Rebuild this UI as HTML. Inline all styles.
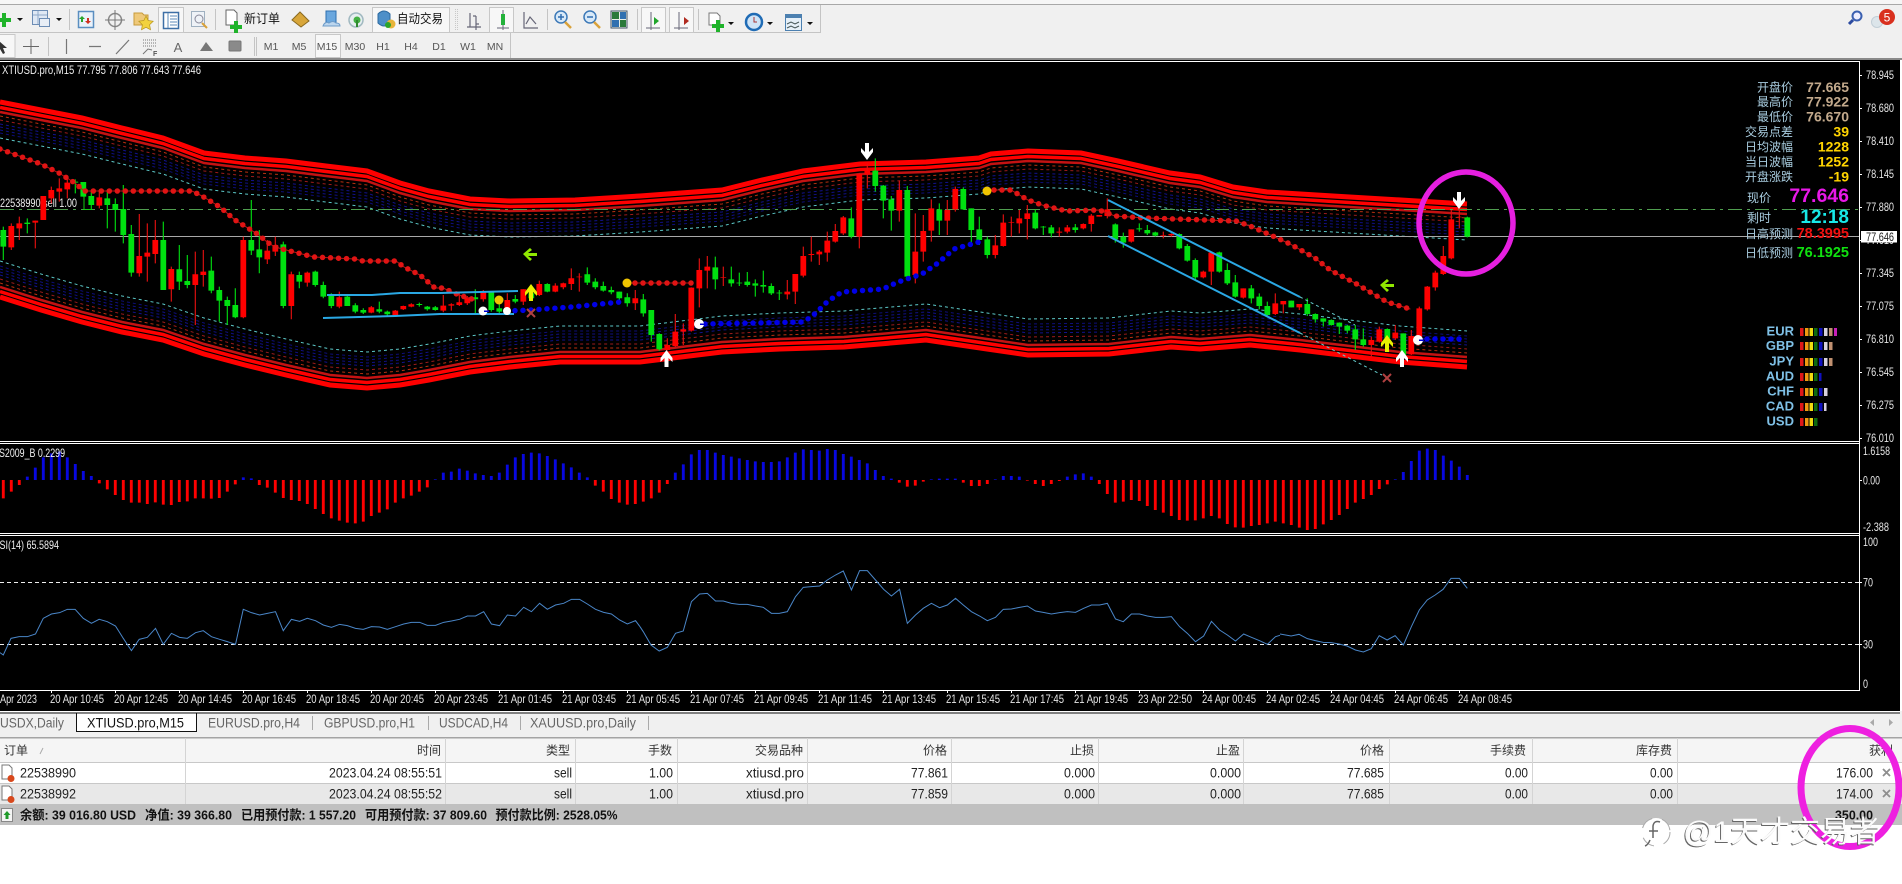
<!DOCTYPE html>
<html lang="zh"><head><meta charset="utf-8"><title>XTIUSD.pro,M15</title>
<style>
html,body{margin:0;padding:0;background:#fff;overflow:hidden}
svg{display:block;font-family:"Liberation Sans","Noto Sans CJK SC",sans-serif}
.ax{font-size:12px;fill:#e6e6e6}
.tb{font-size:13.5px;fill:#222}
.th{font-size:12px;fill:#333;text-anchor:end}
.r{text-anchor:end}
.tab{font-size:13.5px;fill:#666}
.pd{font-size:10.5px;fill:#555;text-anchor:middle}
.lb{font-size:12px;fill:#a9cde0;text-anchor:end}
.v{font-size:14px;font-weight:bold;fill:#c2a98c;text-anchor:end}
.y{fill:#ffd400}
.cur{font-size:13px;font-weight:bold;fill:#7fc0e6;text-anchor:end}
.s{font-size:13px;font-weight:bold;fill:#111}
</style></head><body>
<svg width="1902" height="884" viewBox="0 0 1902 884" xmlns="http://www.w3.org/2000/svg">
<defs>
<path id="t" d="M0 99L41 107 82 115 122 125 163 135 204 150 245 155 286 158 326 163 367 168 400 180 429 188 470 196 510 198 575 197 640 193 722 187 762 177 803 168 860 161 926 159 979 155 991 151 1028 148 1081 150 1118 158 1170 170 1200 174 1233 184 1267 189 1333 193 1417 198 1467 201"/>
<path id="b" d="M0 300L41 313 82 325 122 335 163 343 204 357 245 368 286 378 330 388 367 391 400 388 429 383 470 375 510 370 560 365 640 365 722 355 780 352 844 350 926 343 987 352 1028 358 1109 357 1171 350 1200 352 1250 348 1300 353 1333 357 1400 365 1467 370"/>
<path id="ua" d="M-2 9V0L-6 4V0L0-8 6 0V4L2 0V9Z"/>
<path id="la" d="M-7 0L0-6 2-4-2-1H7V2H-2L2 5 0 7Z"/>
</defs>
<rect width="1902" height="884" fill="#fff"/>
<!-- toolbars -->
<rect width="1902" height="60" fill="#f0f0f0"/>
<rect width="1902" height="4" fill="#f6f6f6"/>
<rect y="4" width="1902" height="1" fill="#a8a8a8"/>
<path d="M0 32.5H820.5V5M0 58.5H510.5V33" fill="none" stroke="#c4c4c4"/>
<rect y="58" width="1902" height="2" fill="#8a8a8a"/>
<!-- row 1 icons -->
<path d="M4 13V27M-3 20H11" stroke="#1fb32a" stroke-width="4"/>
<path d="M17 18h6l-3 3zM56 18h6l-3 3zM728 22h6l-3 3zM767 22h6l-3 3zM807 22h6l-3 3z" fill="#111"/>
<rect x="32.500" y="10.500" width="15" height="14" fill="#dfe8f4" stroke="#6d8db5"/><path d="M33 15H47M38 11V24" stroke="#8fa9c9"/><rect x="39.500" y="18.500" width="10" height="8" fill="#e8eef6" stroke="#6d8db5"/>
<path d="M69.500 9V30M215.500 9V30M637.500 9V30M547.500 9V30M698.500 9V30" stroke="#c4c4c4"/>
<rect x="78.500" y="11.500" width="15" height="16" fill="#eaf2fa" stroke="#5a8ec0" stroke-width="1.500"/><path d="M82 16l3 3h-2v3h-2v-3h-2z" fill="#2aa52a"/><path d="M88 24l-3-3h2v-3h2v3h2z" fill="#d03020"/>
<circle cx="115" cy="20" r="6.500" fill="none" stroke="#888" stroke-width="1.500"/><path d="M115 10V30M105 20H125" stroke="#777"/>
<path d="M134 13h8l2 2h4v10h-14z" fill="#efc97a" stroke="#c79a3a"/><path d="M146 16l2.200 4.500 5 .7-3.600 3.500.9 5-4.500-2.400-4.500 2.400.9-5-3.600-3.500 5-.7z" fill="#f2d23e" stroke="#b8961e" stroke-width=".7"/>
<rect x="158.500" y="7.500" width="25" height="25" fill="#f7f7f7" stroke="#c8c8c8"/>
<rect x="163.500" y="12.500" width="15" height="16" fill="#fff" stroke="#3d6fa6" stroke-width="1.500"/><path d="M168 13V28M170 16H177M170 19H177M170 22H177M170 25H177" stroke="#5b89b8"/>
<rect x="191.500" y="11.500" width="13" height="15" fill="#eef2f7" stroke="#9fb0c0"/><circle cx="199" cy="19" r="4" fill="none" stroke="#889"/><path d="M202 23l5 5" stroke="#d9a13a" stroke-width="2"/>
<path d="M226 10h8l3 3v12h-11z" fill="#fff" stroke="#666"/><path d="M236 21v12M230 27h12" stroke="#1fb32a" stroke-width="4"/>
<text x="244" y="23" font-size="12.500" fill="#111" textLength="36" lengthAdjust="spacingAndGlyphs">新订单</text>
<path d="M300 12l9 9-8 6-9-7z" fill="#d8a63a" stroke="#8a6a20"/>
<path d="M326 11h10v12h-10z" fill="#6aa7de" stroke="#2d6fb0"/><path d="M323 26q2-5 6-3 4-3 7 0 4 0 4 3z" fill="#bcd6ee" stroke="#6d9bc8"/>
<circle cx="356" cy="20" r="7" fill="#e6eef0" stroke="#a0b8c0" stroke-width="1.500"/><circle cx="357" cy="20" r="3.500" fill="#44b044"/><path d="M357 20v7" stroke="#2f8a2f" stroke-width="2"/>
<rect x="372.500" y="7.500" width="77" height="25" fill="#f7f7f7" stroke="#c8c8c8"/>
<path d="M378 14q6-6 12 0v9q-6 6-12 0z" fill="#4d8fc8" stroke="#2c6aa0"/><circle cx="391" cy="24" r="4.500" fill="#e8b43a"/><circle cx="388" cy="25" r="3" fill="#2aa52a"/>
<text x="397" y="23" font-size="12.500" fill="#111" textLength="46" lengthAdjust="spacingAndGlyphs">自动交易</text>
<path d="M455.500 9V30M457.500 9V30" stroke="#c8c8c8" stroke-dasharray="1 1"/>
<path d="M470 13V27M467 27H481M476 16V30M473 16H476M476 24H479" stroke="#667" stroke-width="1.200" fill="none"/>
<rect x="489.500" y="7.500" width="24" height="25" fill="#f7f7f7" stroke="#c8c8c8"/>
<path d="M503 10V30M497 28H509" stroke="#667"/><rect x="501" y="14" width="4" height="11" fill="#23b13a"/>
<path d="M524 12V28H538M526 24L530 17 536 24" fill="none" stroke="#667" stroke-width="1.200"/>
<circle cx="561" cy="17" r="6" fill="#d8e9f8" stroke="#3c79b8" stroke-width="1.500"/><path d="M558 17h6M561 14v6" stroke="#2f6db0" stroke-width="1.500"/><path d="M565 22l6 6" stroke="#d9a13a" stroke-width="2.500"/>
<circle cx="590" cy="17" r="6" fill="#d8e9f8" stroke="#3c79b8" stroke-width="1.500"/><path d="M587 17h6" stroke="#2f6db0" stroke-width="1.500"/><path d="M594 22l6 6" stroke="#d9a13a" stroke-width="2.500"/>
<rect x="611" y="11" width="16" height="17" fill="#e8f0e8" stroke="#456"/><rect x="612" y="12" width="7" height="7" fill="#2a7a3a"/><rect x="620" y="12" width="6" height="7" fill="#3070b0"/><rect x="612" y="20" width="7" height="7" fill="#3070b0"/><rect x="620" y="20" width="6" height="7" fill="#2a7a3a"/>
<rect x="641.500" y="7.500" width="24" height="25" fill="#f7f7f7" stroke="#c8c8c8"/><rect x="669.500" y="7.500" width="24" height="25" fill="#f7f7f7" stroke="#c8c8c8"/>
<path d="M651 12V30M646 28H660M679 12V30M674 28H688" stroke="#667"/><path d="M654 17l5 4-5 4z" fill="#1fa52a"/><path d="M689 21l-5-4v8z" fill="#b02a20"/>
<path d="M709 13h8l3 3v9h-11z" fill="#fff" stroke="#777"/><path d="M718 20v12M712 26h12" stroke="#1fb32a" stroke-width="4"/>
<circle cx="754" cy="22" r="8" fill="#cfe4f6" stroke="#1f6bb5" stroke-width="2.500"/><path d="M754 17v5h3" stroke="#a33" fill="none"/>
<rect x="785.500" y="14.500" width="16" height="16" fill="#e6f0f8" stroke="#4c80b0"/><rect x="785" y="14" width="17" height="4" fill="#4c80b0"/><path d="M787 24l4-2 4 2 4-2M787 28l4-2 4 2 4-2" stroke="#455" fill="none"/>
<!-- right search/badge -->
<circle cx="1857" cy="16" r="4.500" fill="#eef" stroke="#3a5fb0" stroke-width="2"/><path d="M1853 20l-4 4" stroke="#2b4aa0" stroke-width="3"/>
<circle cx="1877" cy="22" r="5.500" fill="#dce5ea" stroke="#c2ced6"/>
<circle cx="1887" cy="17" r="8" fill="#d9301e"/><text x="1887" y="21.500" font-size="12" fill="#fff" text-anchor="middle">5</text>
<!-- row 2 -->
<rect x="-1" y="34.500" width="16" height="23" fill="#f7f7f7" stroke="#c8c8c8"/>
<path d="M-1 41L7 48 3 48 5 53 3 54 0 49-1 50Z" fill="#333"/>
<path d="M31 39V54M23 46.500H39" stroke="#666"/>
<path d="M48.500 37V56M254.500 37V56M256.500 37V56" stroke="#c4c4c4"/>
<path d="M66.500 39V54M89 46.500H101M116 54L129 40" stroke="#777" stroke-width="1.200"/>
<path d="M143 40H157M143 43H157M143 46H157" stroke="#777" stroke-dasharray="1 1"/><path d="M143 54l5-5 4 1" fill="none" stroke="#777"/>
<text x="153" y="56" font-size="7" font-weight="bold" fill="#555">F</text>
<text x="178" y="52" font-size="13" fill="#666" text-anchor="middle">A</text>
<path d="M200 51L206 42 213 51Z" fill="#777"/>
<rect x="229" y="41" width="12" height="10" rx="1" fill="#8a8a8a" stroke="#777"/>
<rect x="315.500" y="34.500" width="25" height="23" fill="#f7f7f7" stroke="#c8c8c8"/>
<path d="M510.500 33V58" stroke="#c4c4c4"/>
<text class="pd" x="271" y="50">M1</text><text class="pd" x="299" y="50">M5</text><text class="pd" x="327" y="50">M15</text><text class="pd" x="355" y="50">M30</text><text class="pd" x="383" y="50">H1</text><text class="pd" x="411" y="50">H4</text><text class="pd" x="439" y="50">D1</text><text class="pd" x="468" y="50">W1</text><text class="pd" x="495" y="50">MN</text>
<!-- chart background -->
<rect y="60" width="1900" height="651" fill="#000"/>
<path d="M0 61.500H1859.500V690.500H0M0 441.500H1859M0 443.500H1859M0 533.500H1859M0 535.500H1859" fill="none" stroke="#fff"/>
<!-- bands -->
<g fill="none">
<use href="#t" y="3" stroke="#f00" stroke-width="5"/>
<use href="#t" y="8.500" stroke="#f00" stroke-width="3.500"/>
<use href="#t" y="13" stroke="#c41212" stroke-width="2.500"/>
<g stroke-dasharray="3 3" stroke-width="1">
<use href="#t" y="17" stroke="#b83010"/>
<use href="#t" y="21" stroke="#9c1c1c"/>
<use href="#t" y="25" stroke="#12128c"/>
<use href="#t" y="28" stroke="#101084"/>
<use href="#t" y="31" stroke="#101084"/>
<use href="#t" y="34" stroke="#0e0e78"/>
<use href="#t" y="39" stroke="#5cc8c8"/>
</g>
<use href="#b" y="-3" stroke="#f00" stroke-width="5"/>
<use href="#b" y="-8.500" stroke="#f00" stroke-width="3.500"/>
<use href="#b" y="-13" stroke="#c41212" stroke-width="2.500"/>
<g stroke-dasharray="3 3" stroke-width="1">
<use href="#b" y="-17" stroke="#b83010"/>
<use href="#b" y="-21" stroke="#9c1c1c"/>
<use href="#b" y="-25" stroke="#12128c"/>
<use href="#b" y="-28" stroke="#101084"/>
<use href="#b" y="-31" stroke="#101084"/>
<use href="#b" y="-34" stroke="#0e0e78"/>
<use href="#b" y="-39" stroke="#5cc8c8"/>
</g>
</g>
<!-- h lines -->
<path d="M0 209.500H1859" stroke="#4f9e4f" stroke-dasharray="14 5 3 5"/>
<path d="M0 236.500H1859" stroke="#a8a8a8"/>
<text x="0" y="207" font-size="12" fill="#eee" textLength="77" lengthAdjust="spacingAndGlyphs">22538990 sell 1.00</text>
<path d="M84 191V209.500H92" fill="none" stroke="#11cc11"/>
<!-- candles A -->
<g transform="translate(3.3 60) scale(8 .3333)" fill="none">
<path stroke="#00e010" stroke-width=".14" d="M0 500V600M3 475V520M9 358V400M10 366V410M11 395V450M13 390V505M14 415V515M15 375V550M16 495V650M20 485V690M22 555V690M23 585V685M26 590V700M27 680V785M28 710V795M29 685V775M31 420V585M32 510V640M35 545V745M37 635V685M39 632V680M40 665V715M41 700V745M43 705V738M44 730V760M45 745V762M47 725V760M48 752V768M52 728V740M53 738V752M54 738V752M59 688V765M61 695V755M62 712V762M64 705V730M66 700V720M68 670V697M73 622V675M74 655V688M75 665V695M76 680V703M77 695V730M78 700V740"/>
<path stroke="#00e010" stroke-width=".72" d="M0 510V560M3 488V492M9 365V368M10 366V410M11 408V435M13 415V435M14 432V450M15 447V525M16 522V638M20 540V690M22 628V665M23 663V675M26 632V692M27 690V722M28 720V738M29 735V772M31 540V572M32 568V592M35 553V738M37 645V665M39 635V675M40 675V710M41 707V738M43 710V738M44 736V755M45 750V758M47 748V755M48 755V763M52 732V735M53 740V748M54 742V750M59 712V718M61 695V750M62 745V755M64 717V725M66 700V715M68 672V695M73 643V668M74 665V682M75 678V692M76 690V697M77 695V715M78 712V730"/>
<path stroke="#e81010" stroke-width=".14" d="M1 490V570M2 470V540M4 482V565M5 408V480M6 380V430M7 355V425M8 350V415M12 390V445M17 462V650M18 490V665M19 480V610M21 620V725M24 575V795M25 570V680M30 530V775M33 540V612M34 530V588M36 635V778M38 635V680M42 695V745M46 738V760M49 750V770M50 737V750M51 730V742M55 705V757M56 730V752M57 700V738M58 708V735M60 690V725M63 700V765M65 688V735M67 662V708M69 670V697M70 668V688M71 625V690M72 640V695M79 690V750"/>
<path stroke="#f00" stroke-width=".72" d="M1 498V562M2 490V505M4 482V488M5 408V480M6 390V415M7 385V395M8 368V388M12 412V437M17 588V640M18 578V590M19 540V582M21 627V688M24 643V675M25 635V645M30 540V772M33 572V598M34 555V575M36 643V738M38 638V668M42 712V740M46 742V758M49 752V765M50 738V748M51 733V740M55 737V752M56 733V737M57 727V735M58 712V730M60 697V718M63 720V755M65 688V725M67 672V705M69 677V695M70 670V682M71 655V672M72 650V652M79 715V730"/>
</g>
<!-- candles B -->
<g transform="translate(643.3 120) scale(8 .3333)" fill="none">
<path stroke="#00e010" stroke-width=".14" d="M0 522V590M1 570V665M2 640V692M9 410V508M11 440V500M12 458V498M13 456V500M14 478V530M15 452V518M16 490V525M17 510V540M26 262V355M29 115V215M30 195V295M31 228V332M33 198V475M37 250V345M40 202V270M41 265V370M42 290V375M43 350V415M49 268V328M50 318V345M51 315V352M54 312V338M59 310V368M60 338V383M62 310V335M63 315V345M64 335V350M67 340V388M68 372V425M69 415V482M72 395V458M73 430V495M74 465V533M76 495V550M77 520V568M78 545V590"/>
<path stroke="#00e010" stroke-width=".72" d="M0 538V580M1 570V645M2 642V688M9 442V478M11 478V490M12 488V490M13 485V495M14 490V497M15 495V500M16 498V520M17 518V520M26 295V350M29 152V198M30 197V242M31 238V272M33 210V470M37 268V302M40 207V268M41 265V330M42 328V360M43 358V405M49 278V325M50 320V322M51 322V340M54 322V330M59 313V358M60 350V368M62 325V328M63 330V340M64 337V347M67 342V385M68 378V422M69 420V472M72 397V455M73 450V490M74 487V530M76 505V535M77 530V558M78 558V585"/>
<path stroke="#e81010" stroke-width=".14" d="M3 655V692M4 582V682M5 610V675M6 502V635M7 415V562M8 408V505M10 440V498M18 480V538M19 490V552M20 380V472M21 350V425M22 390V435M23 335V425M24 312V368M25 288V345M27 160V385M28 130V205M32 182V305M34 280V490M35 285V425M36 238V365M38 240V345M39 200V275M44 345V415M45 283V380M46 290V350M47 270V340M48 255V358M52 322V350M53 315V340M55 310V328M56 282V335M57 285V290M58 235V295M61 328V368M65 335V355M66 340V350M70 452V475M71 395V495M75 505V536M79 520V585"/>
<path stroke="#f00" stroke-width=".72" d="M3 675V690M4 635V678M5 628V635M6 503V632M7 450V505M8 440V452M10 472V474M18 515V523M19 462V515M20 408V467M21 402V405M22 395V403M23 362V398M24 333V365M25 292V340M27 162V350M28 153V163M32 210V272M34 395V465M35 333V395M36 265V332M38 270V302M39 207V268M44 376V405M45 308V378M46 307V309M47 295V310M48 280V297M52 335V338M53 322V335M55 312V325M56 287V312M57 285V290M58 268V288M61 328V365M65 345V347M66 342V346M70 455V472M71 398V455M75 505V533M79 550V582"/>
</g>
<!-- candles C -->
<g transform="translate(1283.3 160) scale(8 .3333)" fill="none">
<path stroke="#00e010" stroke-width=".14" d="M1 422V442M3 415V468M4 460V488M5 475V500M6 478V497M7 487V522M8 495V520M9 495V570M10 505V560M13 505V570M15 520V600M23 170V232"/>
<path stroke="#00e010" stroke-width=".72" d="M1 422V442M3 432V462M4 462V478M5 475V485M6 480V495M7 488V500M8 497V512M9 508V538M10 538V555M13 507V535M15 520V585M23 172V230"/>
<path stroke="#e81010" stroke-width=".14" d="M0 423V460M2 432V450M11 530V590M12 500V548M14 495V540M16 510V585M17 440V535M18 378V452M19 332V392M20 258V345M21 150V298M22 140V205"/>
<path stroke="#f00" stroke-width=".72" d="M0 423V433M2 432V442M11 540V555M12 508V545M14 518V535M16 528V583M17 445V530M18 380V448M19 338V382M20 288V342M21 178V295"/>
<path stroke="#f00" stroke-width=".5" d="M22 170V172"/>
</g>
<!-- trails -->
<g fill="none" stroke-linecap="round">
<g stroke="#b81414" stroke-width="1">
<path d="M0 149L41 164 59 173 75 183 84 191H192L202 196 220 207 235 220 259 235 267 242 275 247 290 251 314 257 355 259 363 261H396L404 267 420 275 435 288H443L459 295 475 300"/>
<path d="M627 283H692M994 190H1011L1028 200 1042 205 1058 209 1067 211 1099 210 1115 216 1146 218 1236 221 1250 226 1275 237 1290 244 1315 258 1330 270 1355 283 1370 292 1387 302 1410 309"/>
</g>
<g stroke="#e01414" stroke-width="5.500" stroke-dasharray="0 8">
<path d="M0 149L41 164 59 173 75 183 84 191H192L202 196 220 207 235 220 259 235 267 242 275 247 290 251 314 257 355 259 363 261H396L404 267 420 275 435 288H443L459 295 475 300"/>
<path d="M627 283H692M994 190H1011L1028 200 1042 205 1058 209 1067 211 1099 210 1115 216 1146 218 1236 221 1250 226 1275 237 1290 244 1315 258 1330 270 1355 283 1370 292 1387 302 1410 309"/>
</g>
<g stroke="#0000e6" stroke-width="5.500" stroke-dasharray="0 8">
<path d="M507 311L531 310 571 307 620 302"/>
<path d="M705 324L803 322 811 317 818 311 826 303 834 297 842 292 883 289 898 282 913 277 922 274 938 263 954 249 979 242"/>
<path d="M1427 339H1467"/>
</g>
</g>
<!-- channels -->
<g fill="none" stroke="#2aa8e4" stroke-width="2">
<path d="M327 295H372L400 293H440L518 291M323 318L395 316 440 314H514"/>
<path d="M1108 200L1300 297M1108 236L1300 333"/>
</g>
<path d="M1300 297L1355 325M1300 333L1382 375" fill="none" stroke="#6cc" stroke-dasharray="3 3"/>
<!-- markers -->
<g fill="#fff">
<use href="#ua" transform="translate(867 152) scale(1 -1)"/>
<use href="#ua" transform="translate(666.500 358)"/>
<use href="#ua" transform="translate(1402 358)"/>
<use href="#ua" transform="translate(1459 201) scale(1 -1)"/>
<circle cx="483" cy="311" r="4.500"/><circle cx="507" cy="311" r="4"/><circle cx="699" cy="324" r="5"/><circle cx="1418" cy="340" r="5"/>
</g>
<path d="M484 310.500h5v1.500h-5zM700 323.500h5v1.500h-5zM1419 339.500h5v1.500h-5z" fill="#0000d0"/>
<g fill="#e8f000"><use href="#ua" transform="translate(531 292)"/><use href="#ua" transform="translate(1387 343)"/></g>
<g fill="#90e800"><use href="#la" transform="translate(530 254)"/><use href="#la" transform="translate(1387 285)"/></g>
<g fill="#f0c400"><circle cx="499" cy="300" r="4.500"/><circle cx="627" cy="283" r="4.500"/><circle cx="987" cy="191" r="4.500"/></g>
<path d="M527 309l8 8M535 309l-8 8M1383 374l8 8M1391 374l-8 8" stroke="#b04040" stroke-width="2"/>
<!-- macd -->
<g transform="translate(3.3 430) scale(8 .3333)" fill="none" stroke-width=".36">
<path stroke="#f00" d="M0 150V205M1 150V185M2 150V165M12 150V160M13 150V178M14 150V195M15 150V210M16 150V218M17 150V218M18 150V222M19 150V217M20 150V224M21 150V225M22 150V216M23 150V214M24 150V205M25 150V205M26 150V206M27 150V204M28 150V185M29 150V163M32 150V165M33 150V173M34 150V188M35 150V204M36 150V210M37 150V213M38 150V222M39 150V237M40 150V252M41 150V265M42 150V272M43 150V278M44 150V280M45 150V275M46 150V258M47 150V248M48 150V238M49 150V218M50 150V205M51 150V197M52 150V185M53 150V172M74 150V167M75 150V185M76 150V207M77 150V218M78 150V224M79 150V222M80 150V215M81 150V205M82 150V188M83 150V162M112 150V158M113 150V170M114 150V167M115 150V155M120 150V158M121 150V168M122 150V168M123 150V162M128 150V152M129 150V162M130 150V168M131 150V162M132 150V153M137 150V162M138 150V192M139 150V218M140 150V215M141 150V210M142 150V213M143 150V228M144 150V240M145 150V248M146 150V258M147 150V270M148 150V272M149 150V271M150 150V265M151 150V258M152 150V265M153 150V282M154 150V292M155 150V293M156 150V288M157 150V285M158 150V280M159 150V275M160 150V280M161 150V285M162 150V293M163 150V300M164 150V297M165 150V283M166 150V270M167 150V255M168 150V237M169 150V218M170 150V207M171 150V195M172 150V177M173 150V163"/>
<path stroke="#0808e0" d="M3 150V140M4 150V113M5 150V82M6 150V70M7 150V65M8 150V82M9 150V102M10 150V123M11 150V138M30 150V142M31 150V145M54 150V148M55 150V128M56 150V125M57 150V116M58 150V122M59 150V130M60 150V135M61 150V138M62 150V128M63 150V104M64 150V82M65 150V72M66 150V68M67 150V70M68 150V78M69 150V88M70 150V100M71 150V112M72 150V128M73 150V142M84 150V128M85 150V103M86 150V73M87 150V60M88 150V60M89 150V68M90 150V75M91 150V80M92 150V85M93 150V90M94 150V94M95 150V96M96 150V96M97 150V94M98 150V82M99 150V68M100 150V58M101 150V60M102 150V62M103 150V57M104 150V60M105 150V72M106 150V80M107 150V90M108 150V100M109 150V120M110 150V138M111 150V146M116 150V148M117 150V146M118 150V146M119 150V146M124 150V148M125 150V138M126 150V138M127 150V140M133 150V140M134 150V133M135 150V130M136 150V140M174 150V148M175 150V126M176 150V93M177 150V62M178 150V56M179 150V60M180 150V77M181 150V92M182 150V110M183 150V135"/>
</g>
<!-- RSI -->
<path d="M0 582.500H1859M0 644.500H1859" stroke="#eee" stroke-dasharray="4 3"/>
<g fill="none" stroke="#4a86c8" stroke-width="1">
<polyline vector-effect="non-scaling-stroke" transform="translate(0 430) scale(.40816 .33333)" points="0,668 8,675 27,625 47,620 67,620 87,612 106,565 126,552 146,548 165,538 184,538 204,565 224,580 243,568 263,575 283,588 302,625 322,662 341,628 361,622 381,595 400,643 420,610 440,622 459,625 479,608 498,602 518,620 538,628 557,635 577,643 596,538 616,548 636,555 655,550 675,545 694,602 714,568 734,574 753,565 773,572 792,585 812,592 832,583 851,587 871,595 890,598 910,590 930,591 949,598 969,590 989,582 1008,577 1028,577 1047,586 1067,586 1087,577 1106,573 1126,568 1145,558 1165,558 1185,545 1204,582 1224,587 1243,555 1263,558 1283,532 1302,545 1322,520 1341,538 1361,525 1381,520 1400,508 1420,508 1439,522 1459,538 1479,547 1498,552 1518,570 1537,582 1557,572 1568,590"/>
<polyline vector-effect="non-scaling-stroke" transform="translate(640 430) scale(.40816 .33333)" points="0,590 8,605 27,645 47,663 67,652 87,610 106,603 126,515 146,492 165,490 185,513 204,513 224,520 243,523 263,523 283,528 302,532 322,550 341,550 361,545 381,500 400,472 420,470 440,468 459,450 479,435 498,423 518,480 538,422 557,422 577,450 597,478 616,498 636,478 655,580 675,555 694,535 714,520 734,533 753,525 773,505 792,525 812,545 832,558 851,572 871,562 890,538 910,537 930,532 949,528 969,543 988,547 1008,552 1028,548 1047,545 1067,547 1087,535 1106,525 1126,525 1145,520 1165,567 1184,575 1204,552 1224,552 1243,558 1263,562 1283,562 1302,560 1322,590 1341,610 1361,635 1381,618 1400,574 1420,600 1439,615 1459,633 1479,612 1498,622 1518,632 1537,643 1557,620 1568,616"/>
<polyline vector-effect="non-scaling-stroke" transform="translate(1280 430) scale(.39683 .33333)" points="0,612 28,618 48,613 69,626 89,632 109,637 129,638 149,642 169,648 190,660 210,666 230,656 250,617 270,630 290,617 311,645 331,590 351,540 371,510 391,495 411,478 431,445 452,445 472,475"/>
</g>
<!-- chart labels -->
<text x="2" y="74" font-size="12" fill="#eee" textLength="199" lengthAdjust="spacingAndGlyphs">XTIUSD.pro,M15  77.795 77.806 77.643 77.646</text>
<text x="-1" y="457" font-size="12" fill="#eee" textLength="66" lengthAdjust="spacingAndGlyphs">S2009_B 0.2299</text>
<text x="-7" y="549" font-size="12" fill="#eee" textLength="66" lengthAdjust="spacingAndGlyphs">RSI(14) 65.5894</text>
<!-- axis ticks -->
<path d="M1859 75.500h3M1859 108.500h3M1859 141.500h3M1859 174.500h3M1859 207.500h3M1859 240.500h3M1859 273.500h3M1859 306.500h3M1859 339.500h3M1859 372.500h3M1859 405.500h3M1859 438.500h3M1859 480.500h3M1859 582.500h3M1859 644.500h3" stroke="#fff"/>
<path d="M51.500 690v3M115.500 690v3M179.500 690v3M243.500 690v3M307.500 690v3M371.500 690v3M435.500 690v3M499.500 690v3M563.500 690v3M627.500 690v3M691.500 690v3M755.500 690v3M819.500 690v3M883.500 690v3M947.500 690v3M1011.500 690v3M1075.500 690v3M1139.500 690v3M1203.500 690v3M1267.500 690v3M1331.500 690v3M1395.500 690v3M1459.500 690v3" stroke="#fff"/>
<text class="ax" x="1866" y="79" textLength="28" lengthAdjust="spacingAndGlyphs">78.945</text>
<text class="ax" x="1866" y="112" textLength="28" lengthAdjust="spacingAndGlyphs">78.680</text>
<text class="ax" x="1866" y="145" textLength="28" lengthAdjust="spacingAndGlyphs">78.410</text>
<text class="ax" x="1866" y="178" textLength="28" lengthAdjust="spacingAndGlyphs">78.145</text>
<text class="ax" x="1866" y="211" textLength="28" lengthAdjust="spacingAndGlyphs">77.880</text>
<text class="ax" x="1866" y="244" textLength="28" lengthAdjust="spacingAndGlyphs">77.610</text>
<text class="ax" x="1866" y="277" textLength="28" lengthAdjust="spacingAndGlyphs">77.345</text>
<text class="ax" x="1866" y="310" textLength="28" lengthAdjust="spacingAndGlyphs">77.075</text>
<text class="ax" x="1866" y="343" textLength="28" lengthAdjust="spacingAndGlyphs">76.810</text>
<text class="ax" x="1866" y="376" textLength="28" lengthAdjust="spacingAndGlyphs">76.545</text>
<text class="ax" x="1866" y="409" textLength="28" lengthAdjust="spacingAndGlyphs">76.275</text>
<text class="ax" x="1866" y="442" textLength="28" lengthAdjust="spacingAndGlyphs">76.010</text>
<text class="ax" x="1863" y="455" textLength="27" lengthAdjust="spacingAndGlyphs">1.6158</text>
<text class="ax" x="1863" y="484.500" textLength="17" lengthAdjust="spacingAndGlyphs">0.00</text>
<text class="ax" x="1863" y="531" textLength="26" lengthAdjust="spacingAndGlyphs">-2.388</text>
<text class="ax" x="1863" y="546" textLength="15" lengthAdjust="spacingAndGlyphs">100</text>
<text class="ax" x="1863" y="586.500" textLength="10" lengthAdjust="spacingAndGlyphs">70</text>
<text class="ax" x="1863" y="648.500" textLength="10" lengthAdjust="spacingAndGlyphs">30</text>
<text class="ax" x="1863" y="688" textLength="5" lengthAdjust="spacingAndGlyphs">0</text>
<rect x="1861" y="231" width="36" height="11.500" fill="#fff"/>
<text x="1866" y="241" font-size="12" fill="#222" textLength="28" lengthAdjust="spacingAndGlyphs">77.646</text>
<!-- time labels -->
<text class="ax" x="0" y="703" textLength="37" lengthAdjust="spacingAndGlyphs">Apr 2023</text>
<text class="ax" x="50" y="703" textLength="54" lengthAdjust="spacingAndGlyphs">20 Apr 10:45</text>
<text class="ax" x="114" y="703" textLength="54" lengthAdjust="spacingAndGlyphs">20 Apr 12:45</text>
<text class="ax" x="178" y="703" textLength="54" lengthAdjust="spacingAndGlyphs">20 Apr 14:45</text>
<text class="ax" x="242" y="703" textLength="54" lengthAdjust="spacingAndGlyphs">20 Apr 16:45</text>
<text class="ax" x="306" y="703" textLength="54" lengthAdjust="spacingAndGlyphs">20 Apr 18:45</text>
<text class="ax" x="370" y="703" textLength="54" lengthAdjust="spacingAndGlyphs">20 Apr 20:45</text>
<text class="ax" x="434" y="703" textLength="54" lengthAdjust="spacingAndGlyphs">20 Apr 23:45</text>
<text class="ax" x="498" y="703" textLength="54" lengthAdjust="spacingAndGlyphs">21 Apr 01:45</text>
<text class="ax" x="562" y="703" textLength="54" lengthAdjust="spacingAndGlyphs">21 Apr 03:45</text>
<text class="ax" x="626" y="703" textLength="54" lengthAdjust="spacingAndGlyphs">21 Apr 05:45</text>
<text class="ax" x="690" y="703" textLength="54" lengthAdjust="spacingAndGlyphs">21 Apr 07:45</text>
<text class="ax" x="754" y="703" textLength="54" lengthAdjust="spacingAndGlyphs">21 Apr 09:45</text>
<text class="ax" x="818" y="703" textLength="54" lengthAdjust="spacingAndGlyphs">21 Apr 11:45</text>
<text class="ax" x="882" y="703" textLength="54" lengthAdjust="spacingAndGlyphs">21 Apr 13:45</text>
<text class="ax" x="946" y="703" textLength="54" lengthAdjust="spacingAndGlyphs">21 Apr 15:45</text>
<text class="ax" x="1010" y="703" textLength="54" lengthAdjust="spacingAndGlyphs">21 Apr 17:45</text>
<text class="ax" x="1074" y="703" textLength="54" lengthAdjust="spacingAndGlyphs">21 Apr 19:45</text>
<text class="ax" x="1138" y="703" textLength="54" lengthAdjust="spacingAndGlyphs">23 Apr 22:50</text>
<text class="ax" x="1202" y="703" textLength="54" lengthAdjust="spacingAndGlyphs">24 Apr 00:45</text>
<text class="ax" x="1266" y="703" textLength="54" lengthAdjust="spacingAndGlyphs">24 Apr 02:45</text>
<text class="ax" x="1330" y="703" textLength="54" lengthAdjust="spacingAndGlyphs">24 Apr 04:45</text>
<text class="ax" x="1394" y="703" textLength="54" lengthAdjust="spacingAndGlyphs">24 Apr 06:45</text>
<text class="ax" x="1458" y="703" textLength="54" lengthAdjust="spacingAndGlyphs">24 Apr 08:45</text>
<!-- info panel -->
<text class="lb" x="1793" y="91.500">开盘价</text><text class="v" x="1849" y="92">77.665</text>
<text class="lb" x="1793" y="106">最高价</text><text class="v" x="1849" y="106.500">77.922</text>
<text class="lb" x="1793" y="121">最低价</text><text class="v" x="1849" y="121.500">76.670</text>
<text class="lb" x="1793" y="136">交易点差</text><text class="v y" x="1849" y="136.500">39</text>
<text class="lb" x="1793" y="151">日均波幅</text><text class="v y" x="1849" y="151.500">1228</text>
<text class="lb" x="1793" y="166">当日波幅</text><text class="v y" x="1849" y="166.500">1252</text>
<text class="lb" x="1793" y="181">开盘涨跌</text><text class="v y" x="1849" y="181.500">-19</text>
<text class="lb" x="1771" y="202">现价</text><text x="1849" y="202" font-size="19.500" font-weight="bold" fill="#e818e8" text-anchor="end">77.646</text>
<text class="lb" x="1771" y="222">剩时</text><text x="1849" y="223" font-size="19" font-weight="bold" fill="#18e8e8" text-anchor="end">12:18</text>
<text class="lb" x="1793" y="238">日高预测</text><text x="1849" y="238" font-size="14.500" font-weight="bold" fill="#f01010" text-anchor="end">78.3995</text>
<text class="lb" x="1793" y="257">日低预测</text><text x="1849" y="257" font-size="14.500" font-weight="bold" fill="#10e010" text-anchor="end">76.1925</text>
<!-- currency strength -->
<text class="cur" x="1794" y="335.500">EUR</text><text class="cur" x="1794" y="350">GBP</text><text class="cur" x="1794" y="365.500">JPY</text><text class="cur" x="1794" y="380.500">AUD</text><text class="cur" x="1794" y="395.500">CHF</text><text class="cur" x="1794" y="410.500">CAD</text><text class="cur" x="1794" y="425.500">USD</text>
<g>
<g fill="#e01818"><rect x="1800" y="328" width="3.500" height="8"/><rect x="1800" y="342" width="3.500" height="8"/><rect x="1800" y="358" width="3.500" height="8"/><rect x="1800" y="373" width="3.500" height="8"/><rect x="1800" y="388" width="3.500" height="8"/><rect x="1800" y="403" width="3.500" height="8"/><rect x="1800" y="418" width="3.500" height="8"/></g>
<g fill="#f09a10"><rect x="1805" y="328" width="3.500" height="8"/><rect x="1805" y="342" width="3.500" height="8"/><rect x="1805" y="358" width="3.500" height="8"/><rect x="1805" y="373" width="3.500" height="8"/><rect x="1805" y="388" width="3.500" height="8"/><rect x="1805" y="403" width="3.500" height="8"/><rect x="1805" y="418" width="3.500" height="8"/></g>
<g fill="#f0dc10"><rect x="1809.500" y="328" width="3.500" height="8"/><rect x="1809.500" y="342" width="3.500" height="8"/><rect x="1809.500" y="358" width="3.500" height="8"/><rect x="1809.500" y="373" width="3.500" height="8"/><rect x="1809.500" y="388" width="3.500" height="8"/><rect x="1809.500" y="403" width="3.500" height="8"/><rect x="1809.500" y="418" width="3.500" height="8"/></g>
<g fill="#0e6a0e"><rect x="1814" y="328" width="3.500" height="8"/><rect x="1814" y="342" width="3.500" height="8"/><rect x="1814" y="358" width="3.500" height="8"/><rect x="1814" y="373" width="3.500" height="8"/><rect x="1814" y="388" width="3.500" height="8"/><rect x="1814" y="403" width="3.500" height="8"/><rect x="1814" y="418" width="3.500" height="8"/></g>
<g fill="#1010c0"><rect x="1819" y="328" width="3.500" height="8"/><rect x="1819" y="342" width="3.500" height="8"/><rect x="1819" y="358" width="3.500" height="8"/><rect x="1819" y="373" width="2.500" height="8"/><rect x="1819" y="388" width="3.500" height="8"/><rect x="1819" y="403" width="3.500" height="8"/></g>
<g fill="#d8d0dc"><rect x="1824" y="328" width="3.500" height="8"/><rect x="1824" y="342" width="3.500" height="8"/><rect x="1824" y="358" width="3.500" height="8"/><rect x="1824" y="388" width="3.500" height="8"/><rect x="1824" y="403" width="2.500" height="8"/></g>
<g fill="#c09070"><rect x="1829" y="328" width="3.500" height="8"/><rect x="1829" y="342" width="3.500" height="8"/><rect x="1829" y="358" width="3.500" height="8"/></g>
<rect x="1834" y="328" width="3" height="8" fill="#c820b8"/>
</g>
<!-- magenta ring 1 -->
<ellipse cx="1466" cy="223" rx="47" ry="51" fill="none" stroke="#e61fe0" stroke-width="5.500"/>
<!-- tabs -->
<rect y="711" width="1902" height="26" fill="#f0f0f0"/>
<rect y="711" width="1900" height="1" fill="#fff"/>
<rect y="712.500" width="1900" height="1" fill="#111"/>
<rect x="76.500" y="713" width="120" height="18.500" fill="#fff" stroke="#111"/>
<text class="tab" x="0" y="727.500" textLength="64" lengthAdjust="spacingAndGlyphs">USDX,Daily</text>
<text class="tab" x="87" y="727.500" style="fill:#111" textLength="97" lengthAdjust="spacingAndGlyphs">XTIUSD.pro,M15</text>
<text class="tab" x="208" y="727.500" textLength="92" lengthAdjust="spacingAndGlyphs">EURUSD.pro,H4</text>
<text class="tab" x="324" y="727.500" textLength="91" lengthAdjust="spacingAndGlyphs">GBPUSD.pro,H1</text>
<text class="tab" x="439" y="727.500" textLength="69" lengthAdjust="spacingAndGlyphs">USDCAD,H4</text>
<text class="tab" x="530" y="727.500" textLength="106" lengthAdjust="spacingAndGlyphs">XAUUSD.pro,Daily</text>
<path d="M312.500 716V730M428.500 716V730M520.500 716V730M648.500 716V730" stroke="#aaa"/>
<path d="M1874 719v7l-4-3.500zM1889 719v7l4-3.500z" fill="#aaa"/>
<!-- table -->
<rect y="737" width="1902" height="25" fill="#f5f5f5"/>
<rect y="737" width="1902" height="1.500" fill="#a4a4a4"/>
<rect y="762" width="1902" height="21" fill="#fff"/>
<rect y="783" width="1902" height="21" fill="#e8e8e8"/>
<rect y="804" width="1902" height="21" fill="#c0c0c0"/>
<path d="M0 762.500H1902M0 783.500H1902" stroke="#c8c8c8"/>
<path d="M185.500 738V804M445.500 738V804M575.500 738V804M677.500 738V804M807.500 738V804M951.500 738V804M1098.500 738V804M1243.500 738V804M1389.500 738V804M1532.500 738V804M1677.500 738V804" stroke="#d4d4d4"/>
<text x="4" y="754.500" font-size="12" fill="#333">订单</text><path d="M40 754l3-6" stroke="#aaa"/>
<text class="th" x="441" y="754.500">时间</text><text class="th" x="570" y="754.500">类型</text><text class="th" x="672" y="754.500">手数</text><text class="th" x="803" y="754.500">交易品种</text><text class="th" x="947" y="754.500">价格</text><text class="th" x="1094" y="754.500">止损</text><text class="th" x="1240" y="754.500">止盈</text><text class="th" x="1384" y="754.500">价格</text><text class="th" x="1526" y="754.500">手续费</text><text class="th" x="1672" y="754.500">库存费</text><text class="th" x="1893" y="754.500">获利</text>
<!-- row icons -->
<path d="M2 765h7l3 3v11H2z" fill="#fff" stroke="#777"/><circle cx="11" cy="778.500" r="3.500" fill="#d8481c"/><path d="M2 786h7l3 3v11H2z" fill="#fff" stroke="#777"/><circle cx="11" cy="799.500" r="3.500" fill="#d8481c"/>
<text class="tb" x="20" y="777.500" textLength="56" lengthAdjust="spacingAndGlyphs">22538990</text>
<text class="tb r" x="442" y="777.500" textLength="113" lengthAdjust="spacingAndGlyphs">2023.04.24 08:55:51</text><text class="tb r" x="572" y="777.500" textLength="18" lengthAdjust="spacingAndGlyphs">sell</text><text class="tb r" x="673" y="777.500" textLength="24" lengthAdjust="spacingAndGlyphs">1.00</text><text class="tb r" x="804" y="777.500" textLength="58" lengthAdjust="spacingAndGlyphs">xtiusd.pro</text><text class="tb r" x="948" y="777.500" textLength="37" lengthAdjust="spacingAndGlyphs">77.861</text><text class="tb r" x="1095" y="777.500" textLength="31" lengthAdjust="spacingAndGlyphs">0.000</text><text class="tb r" x="1241" y="777.500" textLength="31" lengthAdjust="spacingAndGlyphs">0.000</text><text class="tb r" x="1384" y="777.500" textLength="37" lengthAdjust="spacingAndGlyphs">77.685</text><text class="tb r" x="1528" y="777.500" textLength="23" lengthAdjust="spacingAndGlyphs">0.00</text><text class="tb r" x="1673" y="777.500" textLength="23" lengthAdjust="spacingAndGlyphs">0.00</text><text class="tb r" x="1873" y="777.500" textLength="37" lengthAdjust="spacingAndGlyphs">176.00</text>
<text class="tb" x="20" y="798.500" textLength="56" lengthAdjust="spacingAndGlyphs">22538992</text>
<text class="tb r" x="442" y="798.500" textLength="113" lengthAdjust="spacingAndGlyphs">2023.04.24 08:55:52</text><text class="tb r" x="572" y="798.500" textLength="18" lengthAdjust="spacingAndGlyphs">sell</text><text class="tb r" x="673" y="798.500" textLength="24" lengthAdjust="spacingAndGlyphs">1.00</text><text class="tb r" x="804" y="798.500" textLength="58" lengthAdjust="spacingAndGlyphs">xtiusd.pro</text><text class="tb r" x="948" y="798.500" textLength="37" lengthAdjust="spacingAndGlyphs">77.859</text><text class="tb r" x="1095" y="798.500" textLength="31" lengthAdjust="spacingAndGlyphs">0.000</text><text class="tb r" x="1241" y="798.500" textLength="31" lengthAdjust="spacingAndGlyphs">0.000</text><text class="tb r" x="1384" y="798.500" textLength="37" lengthAdjust="spacingAndGlyphs">77.685</text><text class="tb r" x="1528" y="798.500" textLength="23" lengthAdjust="spacingAndGlyphs">0.00</text><text class="tb r" x="1673" y="798.500" textLength="23" lengthAdjust="spacingAndGlyphs">0.00</text><text class="tb r" x="1873" y="798.500" textLength="37" lengthAdjust="spacingAndGlyphs">174.00</text>
<path d="M1883 769l7 7M1890 769l-7 7M1883 790l7 7M1890 790l-7 7" stroke="#8e8e8e" stroke-width="1.800"/>
<!-- summary -->
<rect x="1.500" y="808.500" width="11" height="13" fill="#f4f4f4" stroke="#888"/><path d="M7 811l3.500 4H8.500v4h-3v-4H3.500z" fill="#1f9a2a"/>
<text class="s" x="20" y="819.500" textLength="116" lengthAdjust="spacingAndGlyphs">余额: 39 016.80 USD</text>
<text class="s" x="145" y="819.500" textLength="87" lengthAdjust="spacingAndGlyphs">净值: 39 366.80</text>
<text class="s" x="241" y="819.500" textLength="115" lengthAdjust="spacingAndGlyphs">已用预付款: 1 557.20</text>
<text class="s" x="365" y="819.500" textLength="122" lengthAdjust="spacingAndGlyphs">可用预付款: 37 809.60</text>
<text class="s" x="495.500" y="819.500" textLength="122" lengthAdjust="spacingAndGlyphs">预付款比例: 2528.05%</text>
<text class="s r" x="1873" y="819.500" textLength="38" lengthAdjust="spacingAndGlyphs">350.00</text>
<!-- magenta ring 2 -->
<ellipse cx="1850" cy="787.500" rx="49" ry="59" fill="none" stroke="#ee20e0" stroke-width="7"/>
<!-- watermark -->
<circle cx="1656" cy="832" r="14" fill="#fff" stroke="#aaa" stroke-dasharray="14 10"/>
<path d="M1650 840q-2 5-5 6M1660 822q-6-2-7 4v12M1649 831h9" fill="none" stroke="#666" stroke-width="1.500"/>
<text x="1682" y="843" font-size="30" fill="#666">@1天才交易者</text>
<text x="1683" y="842" font-size="30" fill="#fbfbfb">@1天才交易者</text>
</svg>
</body></html>
